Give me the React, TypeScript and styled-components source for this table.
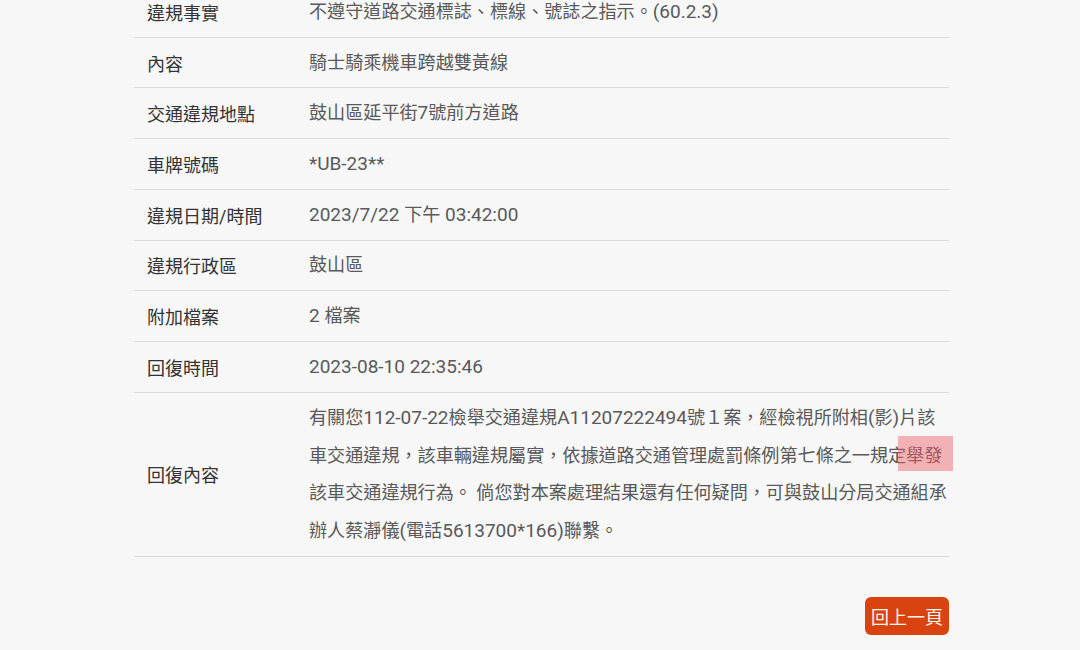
import React from "react";
import styled, { createGlobalStyle } from "styled-components";

const Global = createGlobalStyle`
  html, body {
    margin: 0;
    padding: 0;
    background: #f7f7f7;
    overflow: hidden;
  }
  body {
    font-family: Roboto, "Noto Sans CJK TC", "Noto Sans", sans-serif;
  }
`;

const Page = styled.div`
  width: 1080px;
  height: 650px;
  overflow: hidden;
  background: #f7f7f7;
`;

const Table = styled.div`
  width: 815px;
  margin: -13px 0 0 134px;
  display: flex;
  flex-direction: column;
`;

const Row = styled.div<{ $tall?: boolean }>`
  display: grid;
  grid-template-columns: 163px 1fr;
  height: ${(p) => (p.$tall ? "164px" : "50.71px")};
  box-sizing: border-box;
  border-bottom: 1px solid #dadada;
`;

const Label = styled.div`
  display: flex;
  align-items: center;
  padding-left: 13px;
  font-size: 18px;
  color: #333;
  white-space: nowrap;
`;

const Value = styled.div<{ $multi?: boolean }>`
  position: relative;
  display: flex;
  flex-direction: column;
  justify-content: center;
  padding: ${(p) => (p.$multi ? "6px 0 6px 12px" : "0 12px")};
  font-size: 18.1px;
  color: #595959;
  line-height: ${(p) => (p.$multi ? "37.6px" : "24px")};
  white-space: nowrap;
`;

const Line = styled.div`
  display: block;
`;

const Latin = styled.span`
  font-size: 19px;
`;

const Highlight = styled.span`
  position: absolute;
  left: 601px;
  top: 43px;
  width: 55px;
  height: 35px;
  background: rgba(236, 92, 98, 0.45);
  pointer-events: none;
`;

const Footer = styled.div`
  width: 815px;
  margin: 40px 0 0 134px;
  display: flex;
  justify-content: flex-end;
`;

const BackButton = styled.button`
  width: 84px;
  height: 38px;
  border: none;
  border-radius: 6px;
  background: #d8430f;
  color: #fff7ee;
  font-family: Roboto, "Noto Sans CJK TC", sans-serif;
  font-size: 18px;
  padding: 0;
  cursor: pointer;
`;

function T({ text }: { text: string }) {
  const parts = text.split(/([\x20-\x7e]+)/).filter((s) => s.length > 0);
  return (
    <>
      {parts.map((p, i) =>
        /^[\x20-\x7e]+$/.test(p) && /[^ ]/.test(p) ? (
          <Latin key={i}>{p}</Latin>
        ) : (
          <React.Fragment key={i}>{p}</React.Fragment>
        )
      )}
    </>
  );
}

const rows: [string, string][] = [
  ["違規事實", "不遵守道路交通標誌、標線、號誌之指示。(60.2.3)"],
  ["內容", "騎士騎乘機車跨越雙黃線"],
  ["交通違規地點", "鼓山區延平街7號前方道路"],
  ["車牌號碼", "*UB-23**"],
  ["違規日期/時間", "2023/7/22 下午 03:42:00"],
  ["違規行政區", "鼓山區"],
  ["附加檔案", "2 檔案"],
  ["回復時間", "2023-08-10 22:35:46"],
];

const reply = [
  "有關您112-07-22檢舉交通違規A11207222494號１案，經檢視所附相(影)片該",
  "車交通違規，該車輛違規屬實，依據道路交通管理處罰條例第七條之一規定舉發",
  "該車交通違規行為。 倘您對本案處理結果還有任何疑問，可與鼓山分局交通組承",
  "辦人蔡瀞儀(電話5613700*166)聯繫。",
];

export default function App() {
  return (
    <Page>
      <Global />
      <Table>
        {rows.map(([l, v]) => (
          <Row key={l}>
            <Label>{l}</Label>
            <Value>
              <Line>
                <T text={v} />
              </Line>
            </Value>
          </Row>
        ))}
        <Row $tall>
          <Label>回復內容</Label>
          <Value $multi>
            {reply.map((line, i) => (
              <Line key={i}>
                <T text={line} />
              </Line>
            ))}
            <Highlight />
          </Value>
        </Row>
      </Table>
      <Footer>
        <BackButton>回上一頁</BackButton>
      </Footer>
    </Page>
  );
}
